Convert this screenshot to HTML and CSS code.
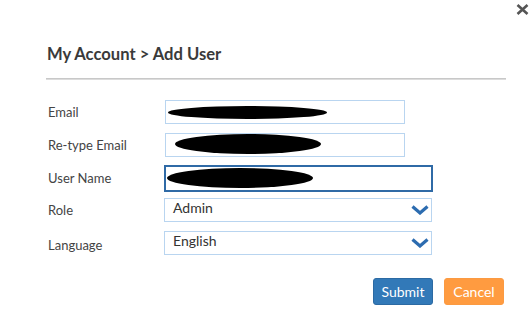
FILE: index.html
```html
<!DOCTYPE html>
<html>
  <head>
    <title>Add User</title>
    <link rel="stylesheet" href="styles.css">
  </head>
  <body>
    <div class="modal">
      <button class="close" type="button" aria-label="Close">
        <svg width="13" height="11" viewBox="0 0 13 11"><path d="M1.5 1 L11.5 10 M11.5 1 L1.5 10" stroke="#555" stroke-width="2.6" fill="none"/></svg>
      </button>
      <h1 class="title">My Account &gt; Add User</h1>
      <div class="rule"></div>

      <form class="form">
        <div class="row">
          <label>Email</label>
          <div class="field short"><span class="redact r1"></span></div>
        </div>
        <div class="row">
          <label>Re-type Email</label>
          <div class="field short"><span class="redact r2"></span></div>
        </div>
        <div class="row">
          <label>User Name</label>
          <div class="field wide focus"><span class="redact r3"></span></div>
        </div>
        <div class="row role">
          <label>Role</label>
          <div class="field wide select">
            <span>Admin</span>
            <svg width="18" height="10" viewBox="0 0 18 10"><polyline points="1.5,1.5 9,8 16.5,1.5" stroke="#2c6cb0" stroke-width="3.2" fill="none"/></svg>
          </div>
        </div>
        <div class="row lang">
          <label>Language</label>
          <div class="field wide select">
            <span>English</span>
            <svg width="18" height="10" viewBox="0 0 18 10"><polyline points="1.5,1.5 9,8 16.5,1.5" stroke="#2c6cb0" stroke-width="3.2" fill="none"/></svg>
          </div>
        </div>

        <div class="buttons">
          <button type="button" class="btn submit">Submit</button>
          <button type="button" class="btn cancel">Cancel</button>
        </div>
      </form>
    </div>
  </body>
</html>
```

FILE: styles.css
```css
body {
  margin: 0;
  background: #fff;
  font-family: Lato, "Open Sans", sans-serif;
  color: #333;
}

.modal {
  position: relative;
  width: 532px;
  height: 317px;
  padding: 44px 28px 0 46px;
  box-sizing: border-box;
}

.close {
  position: absolute;
  top: 4px;
  right: 3px;
  border: none;
  background: none;
  padding: 0;
  line-height: 0;
}

.title {
  margin: 0 0 0 1px;
  font-size: 16.6px;
  font-weight: 700;
  color: #3a3a3a;
  line-height: 20px;
}

.rule {
  margin-top: 14px;
  margin-right: -2px;
  height: 1px;
  background: #c8c8c8;
  border-bottom: 1px solid #dcdcdc;
}

.form {
  margin-top: 20px;
  display: flex;
  flex-direction: column;
  gap: 9px;
}

.row {
  display: flex;
  height: 24px;
}

.row.role {
  margin-top: -1px;
}

.row label {
  width: 116px;
  padding-left: 2px;
  padding-top: 4px;
  font-size: 13px;
  color: #444;
}

.row.lang label {
  padding-top: 6px;
}

.field {
  box-sizing: border-box;
  height: 24px;
  border: 1px solid #b9d5f0;
  display: flex;
  align-items: center;
  background: #fff;
}

.field.short {
  width: 240px;
  margin-left: 1px;
}

.field.wide {
  width: 268px;
}

.field.focus {
  width: 269px;
  height: 27px;
  margin-top: -1px;
  border: 2px solid #2f6aa6;
}

.field.select {
  justify-content: space-between;
  padding: 0 2px 0 8px;
  font-size: 14px;
  color: #333;
}

.field.select span {
  margin-top: -5px;
}

.redact {
  display: block;
  background: #000;
  border-radius: 50%;
}

.r1 {
  width: 159px;
  height: 13px;
  margin-left: 2px;
}

.r2 {
  width: 146px;
  height: 20px;
  margin-left: 9px;
  margin-top: -2px;
}

.r3 {
  width: 146px;
  height: 20px;
  margin-left: 1px;
  margin-top: -2px;
}

.buttons {
  display: flex;
  justify-content: flex-end;
  gap: 11px;
  margin-top: 14px;
}

.btn {
  width: 60px;
  height: 27px;
  border-radius: 3px;
  font-family: Lato, "Open Sans", sans-serif;
  font-size: 14px;
  color: #fff;
  padding: 0;
  cursor: pointer;
}

.submit {
  background: #3279b8;
  border: 1px solid #2c6aa3;
}

.cancel {
  background: #ff9b40;
  border: 1px solid #fb9a42;
}
```
